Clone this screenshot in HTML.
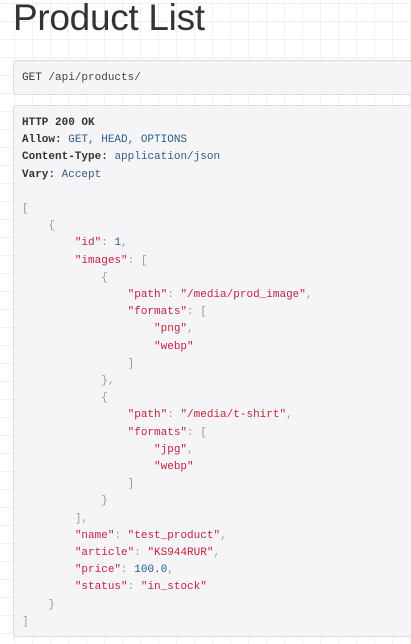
<!DOCTYPE html>
<html><head><style>
html,body{margin:0;padding:0;}
body{width:411px;height:644px;overflow:hidden;background-color:#fff;
background-image:linear-gradient(#f0f0f0 1px,transparent 1px),linear-gradient(90deg,#f0f0f0 1px,transparent 1px);
background-size:18px 18px;background-position:-4px 3px;position:relative;font-family:"Liberation Sans",sans-serif;}
h1{position:absolute;left:13px;top:-3px;margin:0;font-weight:400;font-size:37px;color:#333;letter-spacing:-0.3px;}
.box{position:absolute;left:13px;width:440px;background:#f5f5f7;border:1px solid #ddd;border-radius:4px;box-sizing:border-box;}
pre{margin:0;font-family:"Liberation Mono",monospace;font-size:11px;line-height:17.2px;color:#333;white-space:pre;}
b{font-weight:bold;color:#333}
.v{color:#2e5f85}.s{color:#c4213f}.n{color:#1f5c8c}.p{color:#999}
</style></head><body>
<h1>Product List</h1>
<div class="box" style="top:60px;height:35px;"><pre style="position:absolute;left:8px;top:9px;">GET <span style="color:#444">/api/products/</span></pre></div>
<div class="box" style="top:105px;height:532px;"><pre style="position:absolute;left:8px;top:9px;"><b>HTTP 200 OK</b>
<b>Allow:</b> <span class="v">GET, HEAD, OPTIONS</span>
<b>Content-Type:</b> <span class="v">application/json</span>
<b>Vary:</b> <span class="v">Accept</span>

<span class="p">[</span>
    <span class="p">{</span>
        <span class="s">"id"</span><span class="p">:</span> <span class="n">1</span><span class="p">,</span>
        <span class="s">"images"</span><span class="p">: [</span>
            <span class="p">{</span>
                <span class="s">"path"</span><span class="p">:</span> <span class="s">"/media/prod_image"</span><span class="p">,</span>
                <span class="s">"formats"</span><span class="p">: [</span>
                    <span class="s">"png"</span><span class="p">,</span>
                    <span class="s">"webp"</span>
                <span class="p">]</span>
            <span class="p">},</span>
            <span class="p">{</span>
                <span class="s">"path"</span><span class="p">:</span> <span class="s">"/media/t-shirt"</span><span class="p">,</span>
                <span class="s">"formats"</span><span class="p">: [</span>
                    <span class="s">"jpg"</span><span class="p">,</span>
                    <span class="s">"webp"</span>
                <span class="p">]</span>
            <span class="p">}</span>
        <span class="p">],</span>
        <span class="s">"name"</span><span class="p">:</span> <span class="s">"test_product"</span><span class="p">,</span>
        <span class="s">"article"</span><span class="p">:</span> <span class="s">"KS944RUR"</span><span class="p">,</span>
        <span class="s">"price"</span><span class="p">:</span> <span class="n">100.0</span><span class="p">,</span>
        <span class="s">"status"</span><span class="p">:</span> <span class="s">"in_stock"</span>
    <span class="p">}</span>
<span class="p">]</span></pre></div>
</body></html>
